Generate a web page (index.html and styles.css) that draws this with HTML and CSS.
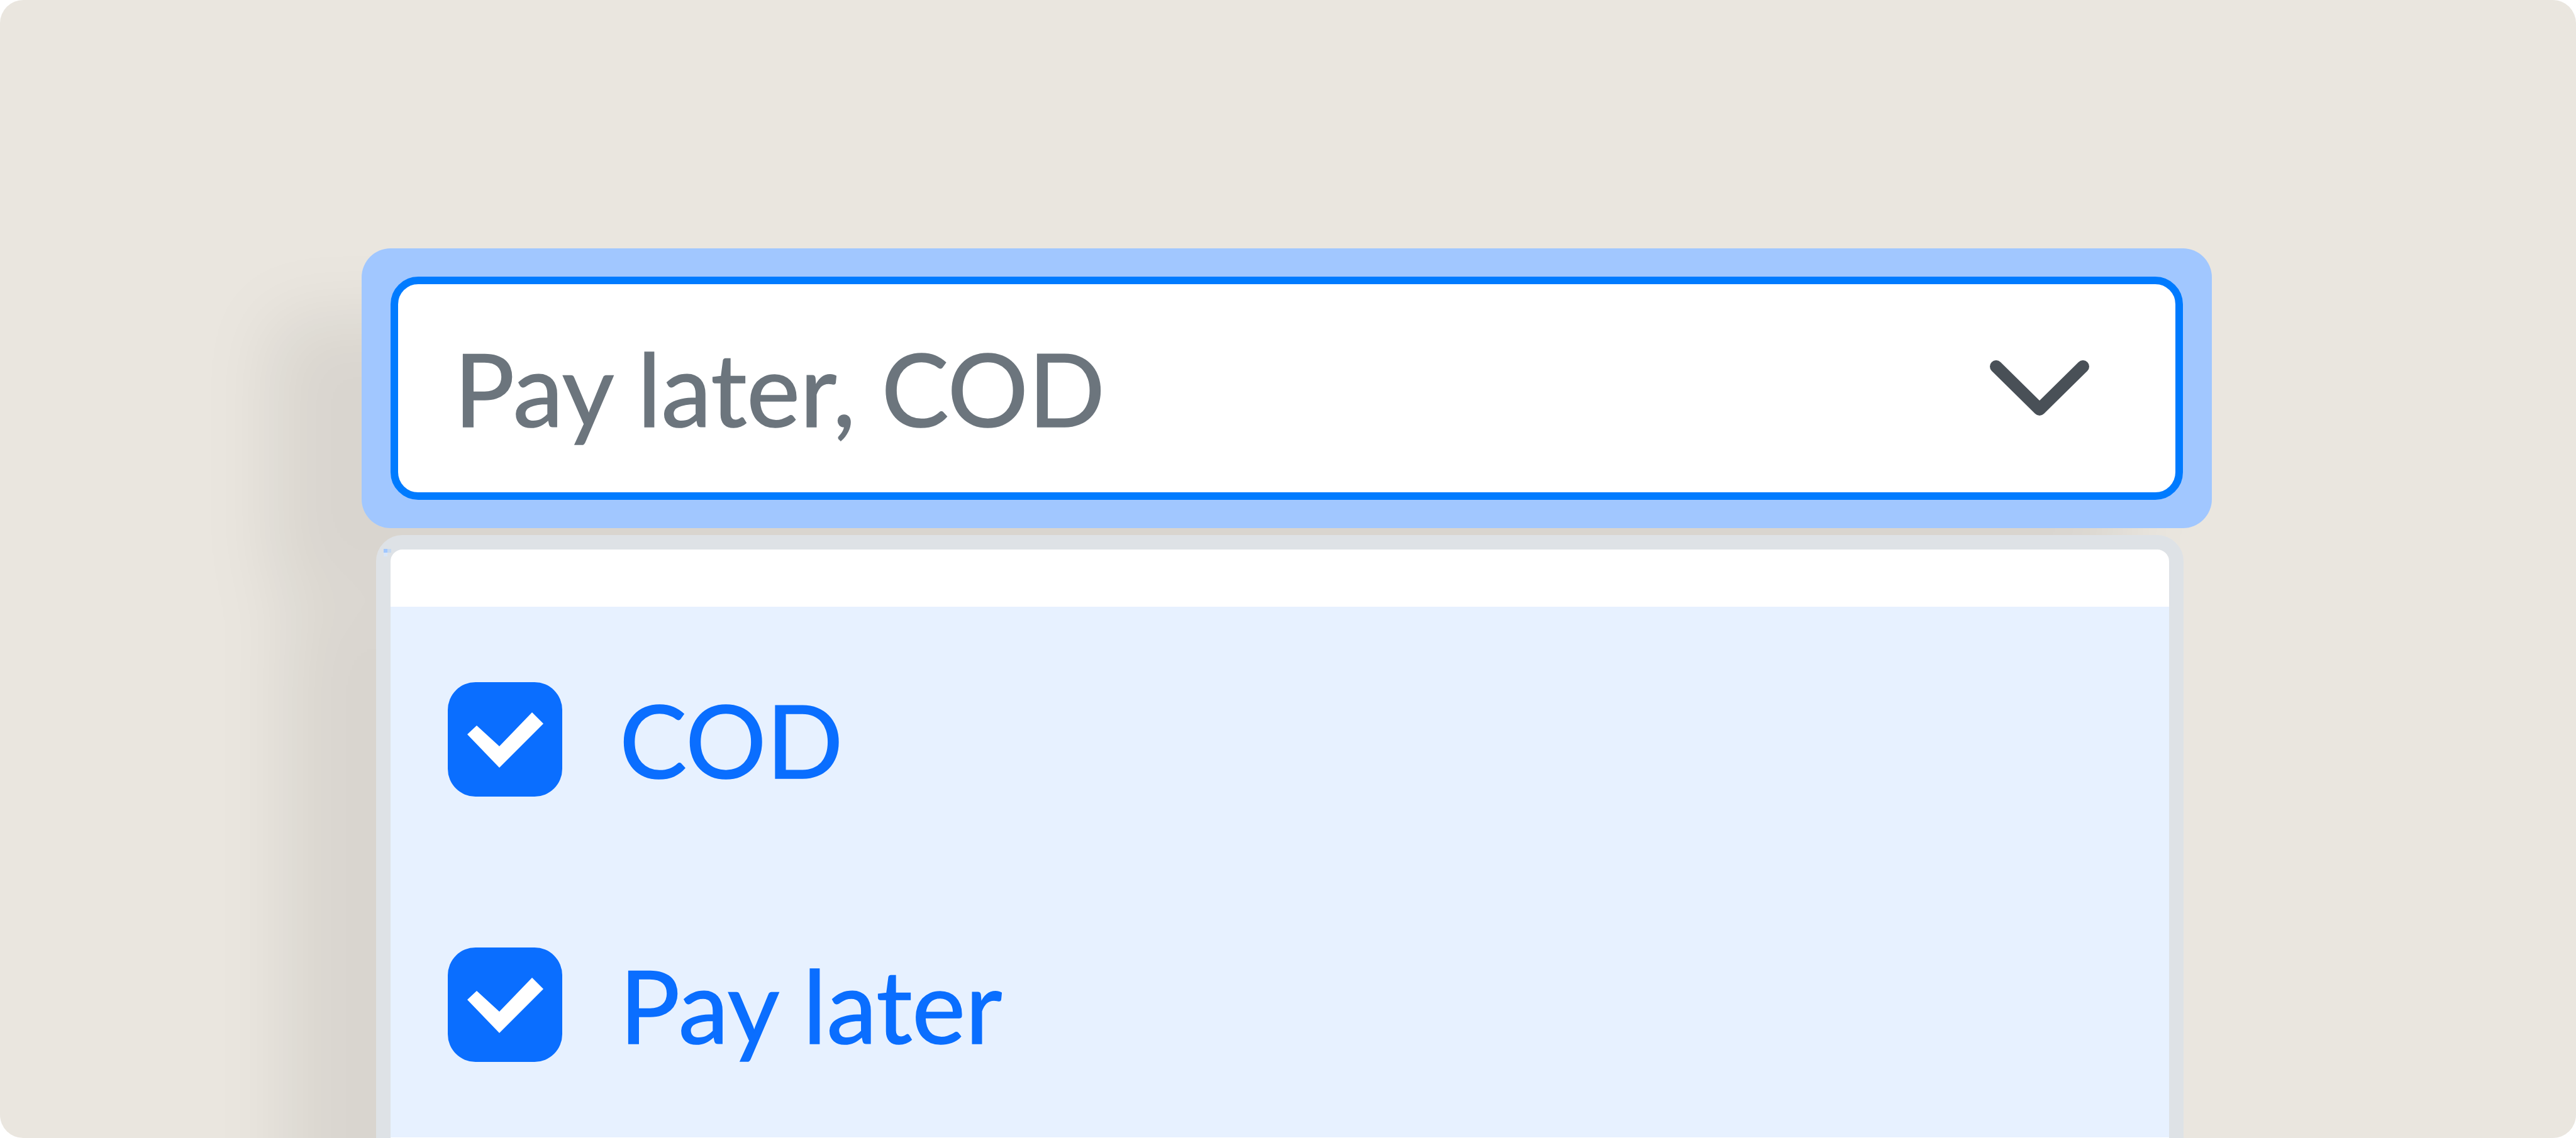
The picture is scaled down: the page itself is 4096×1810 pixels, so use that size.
FILE: index.html
```html
<!DOCTYPE html>
<html lang="en">
<head>
    <meta charset="UTF-8">
    <meta name="viewport" content="width=device-width, initial-scale=1.0">
    <title>Payment Methods</title>
    <link rel="stylesheet" href="styles.css">
</head>
<body>
    <div class="page">
        <div class="select">
            <div class="focus-ring">
                <div class="select-input">
                    <span class="select-value">Pay later, COD</span>
                    <svg class="chevron" viewBox="0 0 160 92" aria-hidden="true">
                        <path d="M11 11L80 79L149 11"/>
                    </svg>
                </div>
            </div>

            <div class="menu">
                <div class="option">
                    <span class="checkbox">
                        <svg viewBox="0 0 182 182" aria-hidden="true">
                            <path d="M31 83L46 69L82 102L134 48L152 66L82 136Z"/>
                        </svg>
                    </span>
                    <span>COD</span>
                </div>
                <div class="option">
                    <span class="checkbox">
                        <svg viewBox="0 0 182 182" aria-hidden="true">
                            <path d="M31 83L46 69L82 102L134 48L152 66L82 136Z"/>
                        </svg>
                    </span>
                    <span>Pay later</span>
                </div>
            </div>
        </div>
    </div>
</body>
</html>
```
FILE: styles.css
```css
* { margin: 0; padding: 0; box-sizing: border-box; }
body { font-family: Lato, sans-serif; font-size: 160.5px; line-height: 1.2; -webkit-text-stroke: 1.6px currentColor; background: #fff; }
.page { height: 1810px; padding: 395px 579px 0 575px; background: #eae6df; border-radius: 37px; overflow: hidden; }
.select { filter: drop-shadow(-144px 108px 54px rgba(0,0,0,0.07)); }

/* Input */
.focus-ring { height: 445px; padding: 45px 46px; background: #a1c7ff; border-radius: 46px; }
.select-input { height: 355px; padding: 0 136px 0 89px; background: #fff; border: 12px solid #007bff; border-radius: 44px; display: flex; justify-content: space-between; align-items: center; }
.select-value { color: #6c757d; white-space: nowrap; }
.chevron { width: 160px; height: 92px; fill: none; stroke: #495057; stroke-width: 20; stroke-linecap: round; stroke-linejoin: round; }

/* Dropdown */
.menu { position: relative; height: 1000px; margin: 11px 45px 0 23px; padding-top: 91px; background: #fff; border: 23px solid #dee2e6; border-radius: 42px; }
.menu::before { content: ""; position: absolute; left: -11px; top: -1px; width: 6px; height: 6px; background: #a1c7ff; box-shadow: 6px 0 #c6d9f0, 0 6px #d9e6f7; }
.option { height: 422px; padding-left: 91px; background: #e7f1ff; color: #0a6eff; display: flex; align-items: center; gap: 91px; }
.checkbox { width: 182px; height: 182px; background: #0a6eff; border-radius: 44px; }
.checkbox svg { display: block; width: 100%; height: 100%; fill: #fff; }
```
